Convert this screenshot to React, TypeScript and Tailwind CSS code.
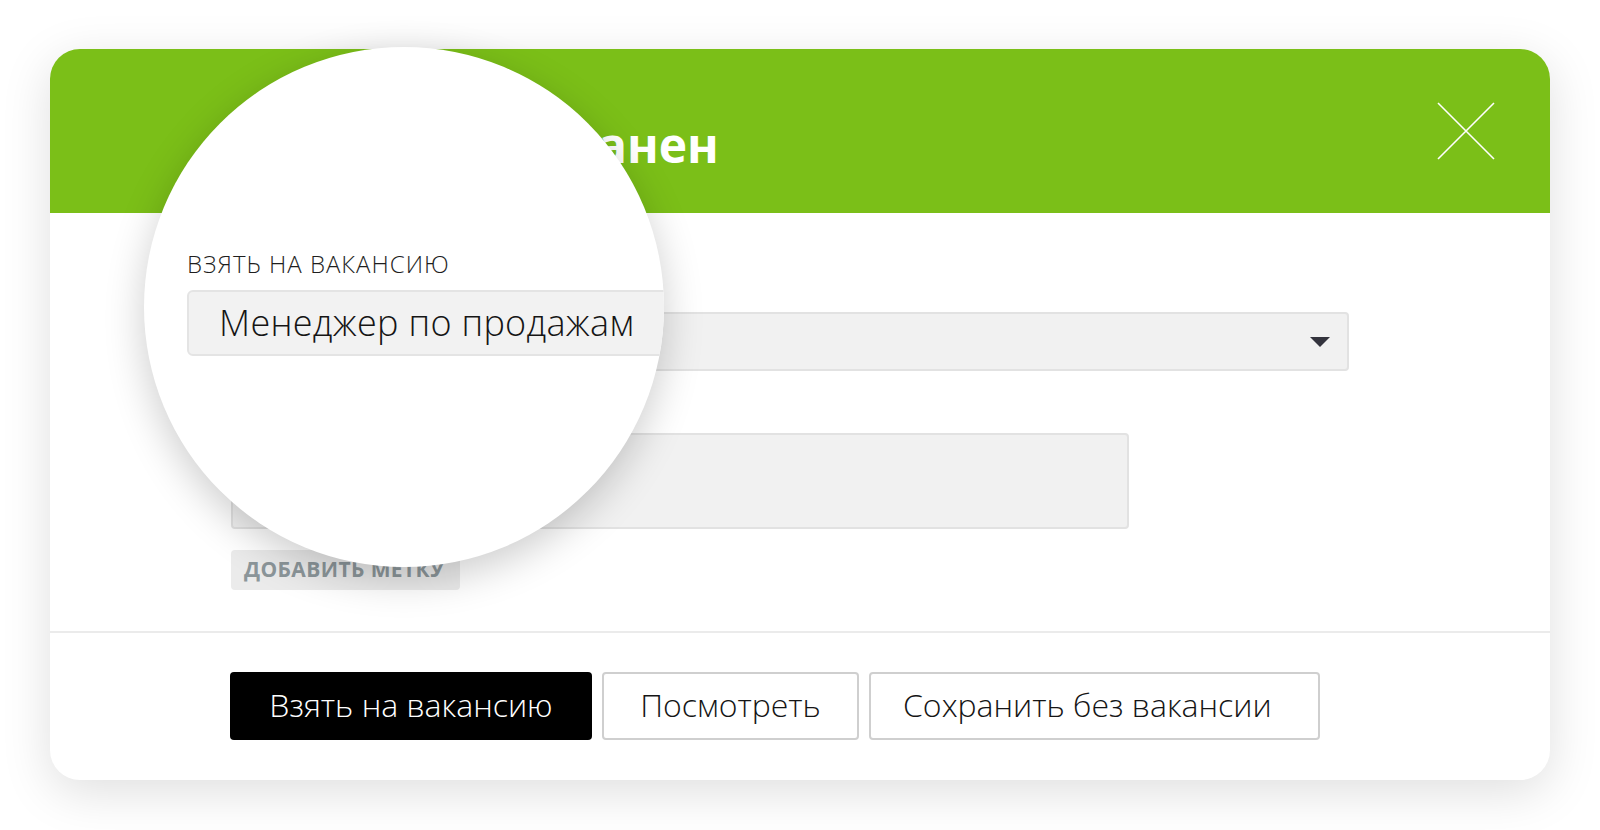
import React from "react"

const font = { fontFamily: '"Open Sans", "Noto Sans", sans-serif' }

function CloseIcon() {
  return (
    <svg width="58" height="58" viewBox="0 0 58 58" fill="none">
      <path d="M1 1 L57 57 M57 1 L1 57" stroke="#ffffff" strokeWidth="1.6" />
    </svg>
  )
}

function Magnifier() {
  return (
    <div className="absolute left-[144px] top-[47px] w-[520px] h-[520px] rounded-full bg-white overflow-hidden shadow-[0_12px_40px_rgba(0,0,0,0.2)]">
      <div className="pt-[203px] pl-[43px]">
        <div className="text-[24px] leading-[28px] font-light text-[#1e1e1e] uppercase tracking-[1px]">
          Взять на вакансию
        </div>
        <div className="mt-[12px] w-[620px] h-[66px] bg-[#f2f2f2] border-2 border-[#e4e4e4] rounded-[6px] flex items-center pl-[30px]">
          <span className="text-[36px] font-light text-[#151515] tracking-[0.3px]">Менеджер по продажам</span>
        </div>
      </div>
    </div>
  )
}

export default function App() {
  return (
    <div className="relative w-[1600px] h-[830px] bg-white pt-[49px] pl-[50px] overflow-hidden" style={font}>
      <div className="w-[1500px] h-[731px] rounded-[30px] bg-white shadow-[0_12px_50px_rgba(0,0,0,0.13)] flex flex-col">
        {/* header */}
        <div className="h-[164px] bg-[#7bbf18] rounded-t-[30px] flex items-center justify-between pl-[176px] pr-[55px]">
          <h1 className="text-[48px] font-bold text-white mt-[28px]">Кандидат сохранен</h1>
          <CloseIcon />
        </div>

        {/* body, labels sit under the magnifier */}
        <div className="pl-[181px] pt-[99px] flex flex-col">
          <div className="w-[1118px] h-[59px] bg-[#f1f1f1] border-2 border-[#e2e2e2] rounded-[4px] flex items-center justify-end pr-[17px]">
            <svg width="20" height="10" viewBox="0 0 20 10">
              <path d="M0 0 H20 L10 10 Z" fill="#33333d" />
            </svg>
          </div>
          <div className="mt-[62px] w-[898px] h-[96px] bg-[#f1f1f1] border-2 border-[#e2e2e2] rounded-[4px]" />
          <div className="mt-[21px] w-[229px] h-[40px] bg-[#ebebeb] rounded-[4px] flex items-center pl-[13px]">
            <span className="text-[21px] font-bold text-[#8c969a] uppercase tracking-[0.4px]">Добавить метку</span>
          </div>
        </div>

        <div className="mt-[41px] h-[2px] bg-[#ebebeb]" />

        <div className="pl-[180px] pt-[39px] flex gap-[10px]">
          <button className="w-[362px] h-[68px] pb-[3px] bg-black text-white rounded-[4px] text-[32px] font-light">
            Взять на вакансию
          </button>
          <button className="w-[257px] h-[68px] pb-[3px] bg-white text-[#151515] border-2 border-[#cfcfcf] rounded-[4px] text-[32px] font-light">
            Посмотреть
          </button>
          <button className="w-[451px] h-[68px] pb-[3px] bg-white text-[#151515] border-2 border-[#cfcfcf] rounded-[4px] text-[32px] font-light text-left pl-[32px]">
            Сохранить без вакансии
          </button>
        </div>
      </div>

      <Magnifier />
    </div>
  )
}
